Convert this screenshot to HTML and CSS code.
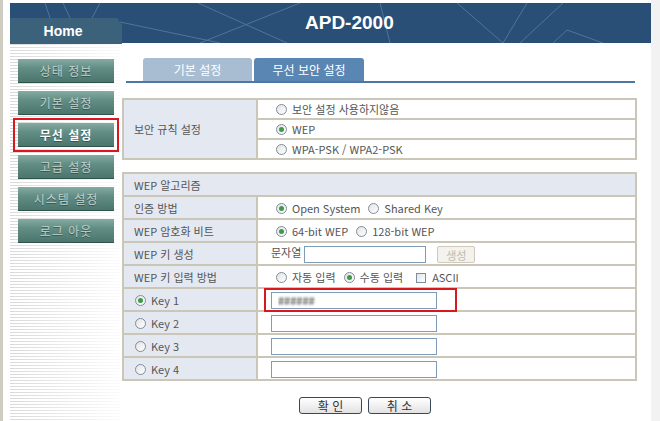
FILE: index.html
```html
<!DOCTYPE html>
<html lang="ko">
<head>
    <meta charset="UTF-8">
    <title>APD-2000</title>
    <link rel="stylesheet" href="styles.css">
</head>
<body>
    <div class="page">
        <header class="top">
            <svg class="top-lines" width="641" height="40" viewBox="0 0 641 40">
                <g stroke="#5b7ea4" stroke-width="1" fill="none" opacity="0.8">
                    <line x1="35" y1="0" x2="40" y2="15"/>
                    <line x1="53" y1="0" x2="60" y2="15"/>
                    <line x1="90" y1="0" x2="82" y2="15"/>
                    <line x1="110" y1="19" x2="210" y2="40"/>
                    <line x1="188" y1="0" x2="277" y2="40"/>
                    <line x1="190" y1="40" x2="290" y2="0"/>
                    <line x1="370" y1="0" x2="380" y2="40"/>
                    <line x1="447" y1="0" x2="493" y2="40"/>
                    <line x1="517" y1="0" x2="493" y2="40"/>
                    <line x1="553" y1="0" x2="510" y2="40"/>
                    <polyline points="543,40 557,27 593,40"/>
                </g>
            </svg>
            <div class="home-tab">Home</div>
            <h1 class="title">APD-2000</h1>
        </header>

        <div class="body-row">
            <nav class="side">
                <a class="side-btn">상태 정보</a>
                <a class="side-btn">기본 설정</a>
                <a class="side-btn current">무선 설정</a>
                <a class="side-btn">고급 설정</a>
                <a class="side-btn">시스템 설정</a>
                <a class="side-btn">로그 아웃</a>
            </nav>

            <main class="main">
                <div class="tabs">
                    <span class="tab">기본 설정</span>
                    <span class="tab active">무선 보안 설정</span>
                </div>

                <table class="form-table">
                    <tr>
                        <td class="label" rowspan="3">보안 규칙 설정</td>
                        <td><span class="radio"></span>보안 설정 사용하지않음</td>
                    </tr>
                    <tr>
                        <td><span class="radio on"></span>WEP</td>
                    </tr>
                    <tr>
                        <td><span class="radio"></span>WPA-PSK / WPA2-PSK</td>
                    </tr>
                </table>

                <table class="form-table tall">
                    <tr>
                        <td class="label head" colspan="2">WEP 알고리즘</td>
                    </tr>
                    <tr>
                        <td class="label">인증 방법</td>
                        <td><span class="radio on"></span>Open System<span class="radio gap"></span>Shared Key</td>
                    </tr>
                    <tr>
                        <td class="label">WEP 암호화 비트</td>
                        <td><span class="radio on"></span>64-bit WEP<span class="radio gap"></span>128-bit WEP</td>
                    </tr>
                    <tr>
                        <td class="label">WEP 키 생성</td>
                        <td>문자열<input class="text phrase" type="text"><button class="gen" disabled>생성</button></td>
                    </tr>
                    <tr>
                        <td class="label">WEP 키 입력 방법</td>
                        <td><span class="radio"></span>자동 입력<span class="radio gap on"></span>수동 입력<span class="check"></span>ASCII</td>
                    </tr>
                    <tr>
                        <td class="label key"><span class="radio on"></span>Key 1</td>
                        <td class="marked"><input class="text masked" type="text" value="######"><span class="highlight"></span></td>
                    </tr>
                    <tr>
                        <td class="label key"><span class="radio"></span>Key 2</td>
                        <td><input class="text" type="text"></td>
                    </tr>
                    <tr>
                        <td class="label key"><span class="radio"></span>Key 3</td>
                        <td><input class="text" type="text"></td>
                    </tr>
                    <tr>
                        <td class="label key"><span class="radio"></span>Key 4</td>
                        <td><input class="text" type="text"></td>
                    </tr>
                </table>

                <div class="actions">
                    <button class="btn">확 인</button>
                    <button class="btn">취 소</button>
                </div>
            </main>
        </div>
    </div>
</body>
</html>
```

FILE: styles.css
```css
html {
    background: linear-gradient(to right, #cfccc1 0, #cfccc1 3px, #fff 3px, #fff 651px, #f2f2f2 651px);
}
body {
    margin: 0;
    font-family: "Noto Sans CJK KR", "DejaVu Sans", sans-serif;
    font-size: 12px;
    color: #555;
}
.page {
    width: 641px;
    margin-left: 10px;
    padding-top: 3px;
}
.top {
    position: relative;
    height: 40px;
    background-color: #294f77;
    display: flex;
    align-items: flex-end;
}
.top-lines {
    position: absolute;
    left: 0;
    top: 0;
}
.home-tab {
    position: relative;
    width: 112px;
    height: 26px;
    margin-bottom: -1px;
    padding-right: 6px;
    box-sizing: border-box;
    background-color: #3c627b;
    clip-path: polygon(0 0, 107px 0, 112px 7px, 112px 100%, 0 100%);
    color: white;
    font: bold 14px "Liberation Sans", Arial, sans-serif;
    display: flex;
    align-items: center;
    justify-content: center;
}
.title {
    position: relative;
    align-self: center;
    margin: 0 0 0 183px;
    color: white;
    font: bold 19px "Liberation Sans", Arial, sans-serif;
}
.body-row {
    display: flex;
    min-height: 378px;
}
.side {
    width: 110px;
    flex-shrink: 0;
    box-sizing: border-box;
    padding: 16px 0 0 8px;
    display: flex;
    flex-direction: column;
    gap: 8px;
    background:
        linear-gradient(to right, rgba(255, 255, 255, 0) 0, rgba(255, 255, 255, 0.9) 100%),
        repeating-linear-gradient(to bottom, #fff 0, #fff 1px, #d9d9d9 1px, #d9d9d9 2px, #fff 2px, #fff 3px);
}
.side-btn {
    width: 96px;
    height: 24px;
    box-sizing: border-box;
    border-bottom: 1px solid #2f534b;
    background: linear-gradient(to bottom, #86aba3 0, #628d84 40%, #4b766d 100%);
    color: #c4d2ce;
    font-size: 12px;
    letter-spacing: 1px;
    text-shadow: 0 1px 0 #35574f;
    display: flex;
    align-items: center;
    justify-content: center;
}
.side-btn.current {
    color: white;
    font-weight: bold;
    outline: 2px solid #d9181e;
    outline-offset: 3px;
}
.main {
    flex: 1;
    padding-left: 2px;
}
.tabs {
    display: flex;
    gap: 2px;
    margin: 15px 16px 0 4px;
    padding-left: 17px;
    border-bottom: 2px solid #4d78a6;
}
.tab {
    width: 109px;
    height: 23px;
    line-height: 23px;
    text-align: center;
    color: white;
    background-color: #a9bdd2;
    border-radius: 3px 3px 0 0;
}
.tab.active {
    width: 110px;
    background-color: #5a86b4;
}
.form-table {
    width: 515px;
    margin-top: 15px;
    border: 1px solid #cbc7b8;
    border-spacing: 0;
    font-size: 11px;
}
.form-table.tall {
    margin-top: 12px;
}
.form-table td {
    height: 18px;
    padding: 0 0 0 13px;
    border: 1px solid #cbc7b8;
    white-space: nowrap;
}
.form-table.tall td {
    height: 21px;
}
.form-table .label {
    width: 122px;
    padding-left: 10px;
    background-color: #e4e9f1;
}
.form-table .key .radio {
    margin-left: 1px;
}
.marked {
    position: relative;
}
.highlight {
    position: absolute;
    left: 6px;
    top: -1px;
    width: 193px;
    height: 24px;
    box-sizing: border-box;
    border: 2px solid #d9181e;
}
.radio {
    display: inline-block;
    position: relative;
    width: 11px;
    height: 11px;
    box-sizing: border-box;
    margin: 0 5px 0 5px;
    border: 1px solid #7e8d9b;
    border-radius: 50%;
    background: linear-gradient(135deg, #e3e3e3, #fff);
    vertical-align: -1px;
}
.radio.gap {
    margin-left: 8px;
}
.radio.on::after {
    content: "";
    position: absolute;
    left: 2px;
    top: 2px;
    width: 5px;
    height: 5px;
    border-radius: 50%;
    background-color: #3d9a4a;
}
.check {
    display: inline-block;
    width: 10px;
    height: 10px;
    box-sizing: border-box;
    margin: 0 6px 0 13px;
    border: 1px solid #7e8d9b;
    background: linear-gradient(135deg, #e3e3e3, #fff);
    vertical-align: -1px;
}
.text {
    width: 166px;
    height: 17px;
    box-sizing: border-box;
    padding: 0 6px;
    border: 1px solid #7f9db9;
    font: inherit;
    vertical-align: middle;
}
.text.masked {
    color: transparent;
    text-shadow: 0 0 2px #7a7a7a, 0 0 3px #9a9a9a;
}
.text.phrase {
    width: 122px;
    margin-left: 3px;
    padding: 0 4px;
}
.gen {
    width: 38px;
    height: 17px;
    margin-left: 11px;
    padding: 0;
    border: 1px solid #cfcabb;
    border-radius: 2px;
    background-color: #f4f2ec;
    color: #bdbab0;
    font: 11px "Noto Sans CJK KR", sans-serif;
    vertical-align: middle;
}
.actions {
    display: flex;
    gap: 6px;
    margin-top: 16px;
    padding-left: 177px;
}
.btn {
    width: 63px;
    height: 17px;
    padding: 0;
    border: 1px solid #39475a;
    border-radius: 3px;
    background: linear-gradient(to bottom, #fff, #e2e2e2);
    color: #333;
    font: 12px "Noto Sans CJK KR", sans-serif;
    line-height: 15px;
}
```
